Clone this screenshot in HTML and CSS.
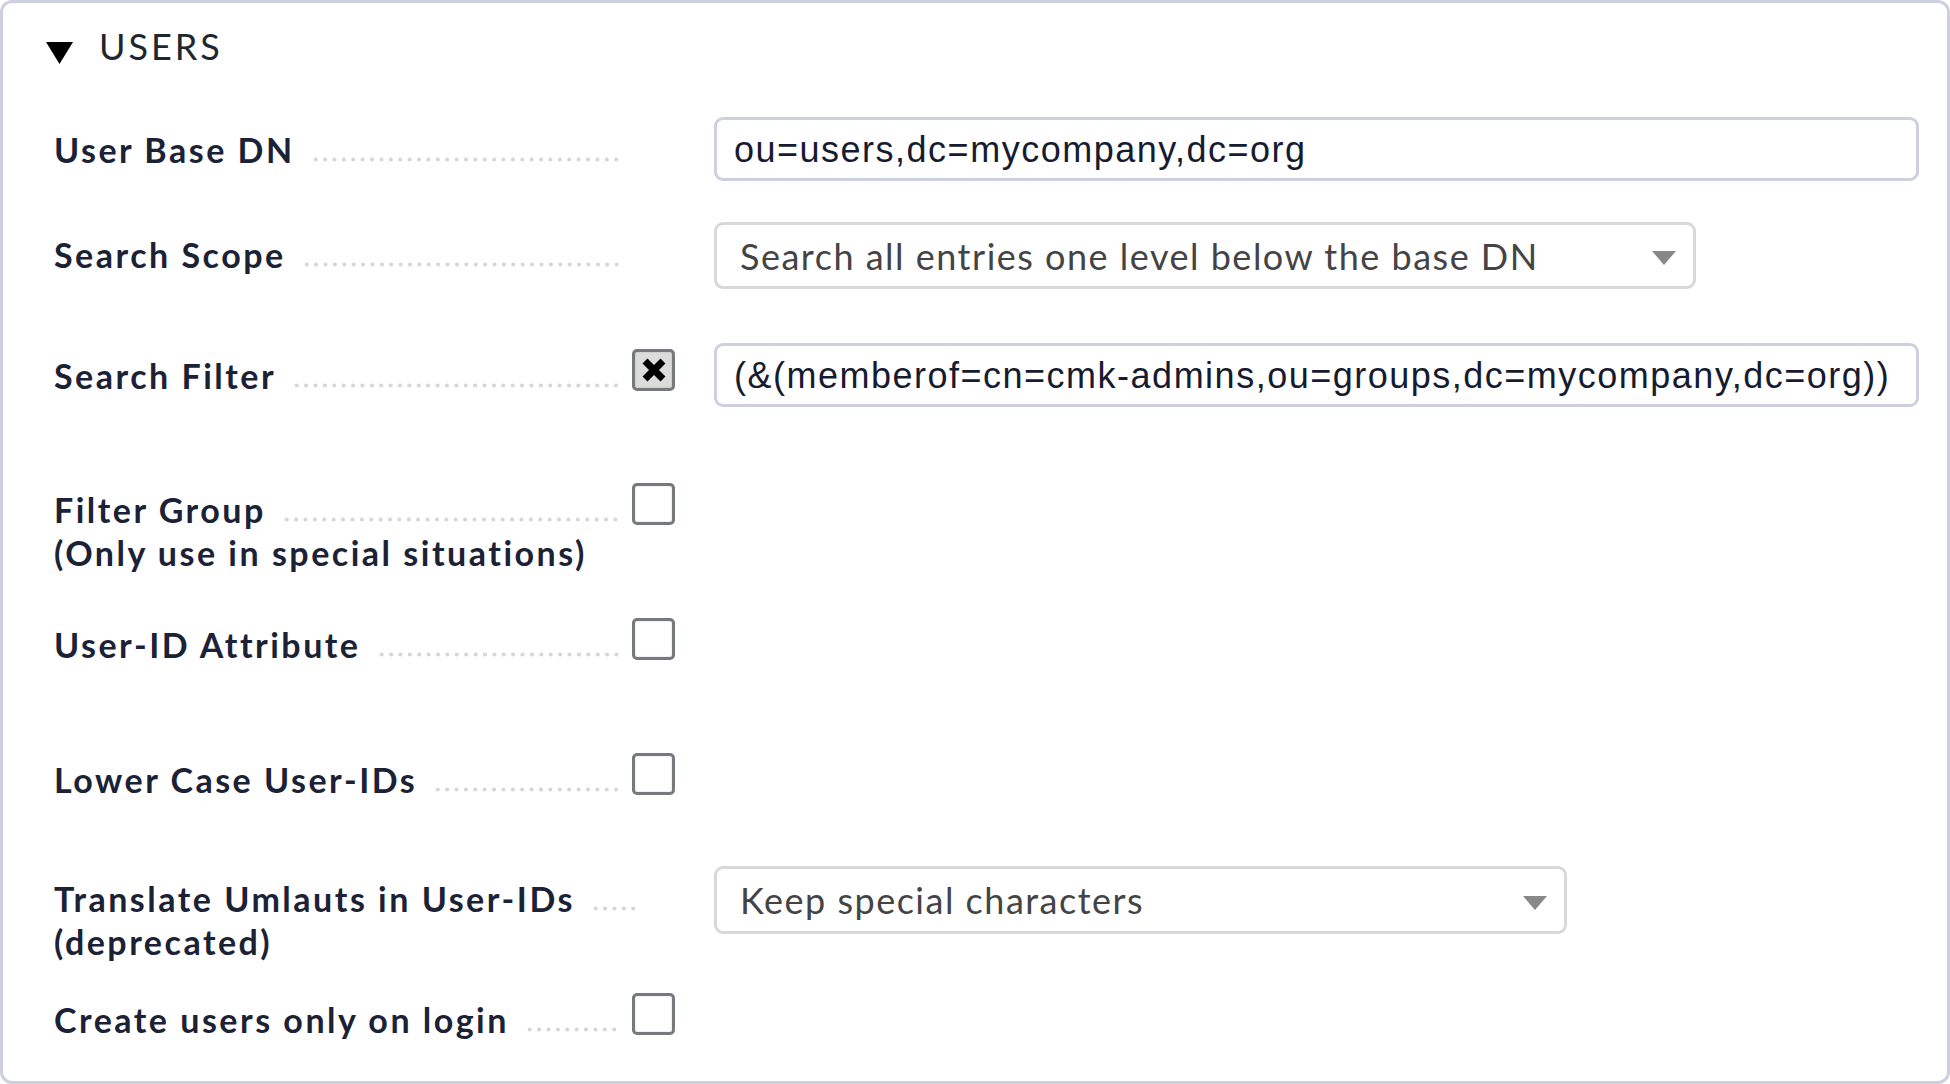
FILE: index.html
```html
<!DOCTYPE html>
<html lang="en">
<head>
<meta charset="utf-8">
<title>Users</title>
<link rel="stylesheet" href="styles.css">
</head>
<body>
<div class="frame">
  <div class="section-head">
    <svg class="fold" width="27" height="22" viewBox="0 0 27 22"><polygon points="0,0 27,0 13.5,22" fill="#000"/></svg>
    <span class="section-title">USERS</span>
  </div>

  <div class="form">
    <!-- row 1 -->
    <div class="legend"><div class="legend-line"><span class="legend-text">User Base DN</span><span class="dots"></span></div></div>
    <div class="cb-cell"></div>
    <div class="value"><input class="text-input" type="text" value="ou=users,dc=mycompany,dc=org"></div>

    <!-- row 2 -->
    <div class="legend"><div class="legend-line"><span class="legend-text">Search Scope</span><span class="dots"></span></div></div>
    <div class="cb-cell"></div>
    <div class="value">
      <div class="select select-wide"><span>Search all entries one level below the base DN</span>
        <svg class="arrow" width="24" height="14" viewBox="0 0 24 14"><polygon points="0,0 24,0 12,14" fill="#888"/></svg>
      </div>
    </div>

    <!-- row 3 -->
    <div class="legend"><div class="legend-line"><span class="legend-text">Search Filter</span><span class="dots"></span></div></div>
    <div class="cb-cell"><span class="cb checked"><svg width="24" height="24" viewBox="0 0 24 24"><path d="M3 3 L21 21 M21 3 L3 21" stroke="#000" stroke-width="7" fill="none"/></svg></span></div>
    <div class="value"><input class="text-input" type="text" value="(&amp;(memberof=cn=cmk-admins,ou=groups,dc=mycompany,dc=org))"></div>

    <!-- row 4 -->
    <div class="legend"><div class="legend-line"><span class="legend-text">Filter Group</span><span class="dots"></span></div><div class="legend-sub">(Only use in special situations)</div></div>
    <div class="cb-cell"><span class="cb"></span></div>
    <div class="value"></div>

    <!-- row 5 -->
    <div class="legend"><div class="legend-line"><span class="legend-text">User-ID Attribute</span><span class="dots"></span></div></div>
    <div class="cb-cell"><span class="cb"></span></div>
    <div class="value"></div>

    <!-- row 6 -->
    <div class="legend"><div class="legend-line"><span class="legend-text">Lower Case User-IDs</span><span class="dots"></span></div></div>
    <div class="cb-cell"><span class="cb"></span></div>
    <div class="value"></div>

    <!-- row 7 -->
    <div class="legend"><div class="legend-line"><span class="legend-text">Translate Umlauts in User-IDs</span><span class="dots"></span></div><div class="legend-sub">(deprecated)</div></div>
    <div class="cb-cell"></div>
    <div class="value">
      <div class="select select-narrow"><span>Keep special characters</span>
        <svg class="arrow" width="24" height="14" viewBox="0 0 24 14"><polygon points="0,0 24,0 12,14" fill="#888"/></svg>
      </div>
    </div>

    <!-- row 8 -->
    <div class="legend"><div class="legend-line"><span class="legend-text">Create users only on login</span><span class="dots"></span></div></div>
    <div class="cb-cell"><span class="cb"></span></div>
    <div class="value"></div>
  </div>
</div>
</body>
</html>
```

FILE: styles.css
```css
* {
  box-sizing: border-box;
}

html,
body {
  margin: 0;
  padding: 0;
  background: #ffffff;
}

body {
  font-family: Lato, "Liberation Sans", sans-serif;
  color: #1e2438;
}

.frame {
  width: 1950px;
  height: 1084px;
  border: 3px solid #cdd0de;
  border-radius: 12px;
  padding-top: 21px;
  overflow: hidden;
}

.section-head {
  display: flex;
  align-items: flex-start;
  padding-left: 43px;
  height: 44px;
}

.fold {
  margin-top: 18px;
  margin-right: 26px;
  flex-shrink: 0;
}

.section-title {
  font-size: 36px;
  line-height: 44px;
  letter-spacing: 3px;
  color: #1e262e;
}

.form {
  display: grid;
  grid-template-columns: 566px 94px 1205px;
  grid-template-rows: 105px 121px 134px 135px 135px 119px 121px auto;
  margin-top: 49px;
  padding-left: 51px;
}

.legend {
  padding-top: 11px;
  font-size: 34px;
  font-weight: 700;
  line-height: 43px;
  letter-spacing: 2.5px;
  color: #1c2236;
}

.legend-line {
  display: flex;
}

.legend-text {
  white-space: nowrap;
  flex-shrink: 0;
}

.dots {
  flex: 1 0 45px;
  margin-left: 16px;
  margin-right: 1px;
  background-image: radial-gradient(circle, #d6d6d6 1.7px, rgba(214, 214, 214, 0) 2.3px);
  background-size: 9.4px 5px;
  background-repeat: repeat-x;
  background-position: 0 29px;
}

.legend-sub {
  white-space: nowrap;
}

.cb-cell {
  padding-left: 12px;
  padding-top: 6px;
}

.cb {
  display: flex;
  align-items: center;
  justify-content: center;
  width: 43px;
  height: 42px;
  border: 3px solid #76797e;
  border-radius: 5px;
  background: #ffffff;
  box-shadow: inset 0 0 2px rgba(0, 0, 0, 0.2);
}

.cb.checked {
  background: #dcdcdc;
}

.text-input {
  display: block;
  width: 1205px;
  height: 64px;
  margin: 0;
  border: 3px solid #cdd0de;
  border-radius: 9px;
  padding: 2px 0 0 17px;
  background: #ffffff;
  font-family: "Liberation Sans", Arial, sans-serif;
  font-size: 36px;
  letter-spacing: 1.5px;
  color: #161b30;
  outline: none;
}

.select {
  display: flex;
  align-items: center;
  justify-content: space-between;
  height: 67px;
  border: 3px solid #d8d8d8;
  border-radius: 9px;
  padding: 0 17px 0 23px;
  background: #ffffff;
  font-family: Lato, sans-serif;
  font-size: 36px;
  letter-spacing: 1.5px;
  color: #444444;
  white-space: nowrap;
}

.select .arrow {
  flex-shrink: 0;
  margin-top: 5px;
}

.select-wide {
  width: 982px;
}

.select-narrow {
  width: 853px;
  height: 68px;
}
```
